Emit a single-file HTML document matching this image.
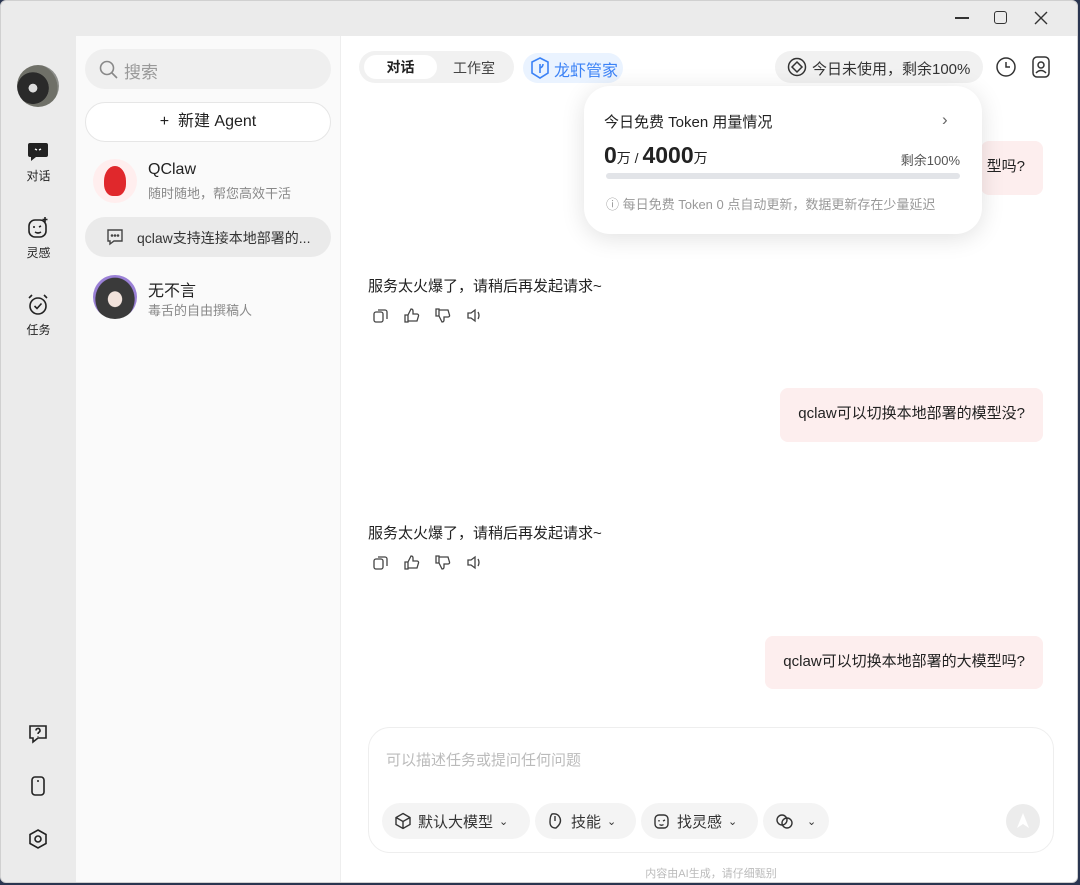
<!DOCTYPE html>
<html><head><meta charset="utf-8"><style>
*{margin:0;padding:0;box-sizing:border-box}
body{width:1080px;height:885px;background:#2a3550;font-family:"Liberation Sans","Noto Sans CJK SC",sans-serif;overflow:hidden;position:relative;color:#222}
.win{position:absolute;left:0;top:0;width:1078px;height:883px;background:#ebebeb;border-radius:6px;overflow:hidden;border:1px solid #d0d0d0}
.abs{position:absolute}
.rail{left:0;top:35px;width:75px;height:850px}
.side{left:75px;top:35px;width:265px;height:850px;background:#fafafa;border-right:1px solid #eee}
.main{left:340px;top:35px;width:740px;height:850px;background:#fff}
.ri{position:absolute;left:0;width:75px;text-align:center;font-size:12px;color:#222}
.pill{position:absolute;border-radius:20px}
.bubble{position:absolute;background:#fdeeee;border-radius:8px;font-size:15px;color:#222;padding:0 18px;line-height:52px}
.act{position:absolute;display:flex;gap:14px}
.act svg{width:17px;height:17px}
.chip{position:absolute;top:802px;height:36px;background:#f4f4f4;border-radius:18px;display:flex;align-items:center;gap:6px;padding:0 12px;font-size:15px;color:#333}
</style></head><body>
<div class="win">
<div class="abs" style="left:954px;top:16px;width:14px;height:1.5px;background:#333"></div>
<div class="abs" style="left:993px;top:10px;width:13px;height:13px;border:1.5px solid #333;border-radius:3px"></div>
<svg class="abs" style="left:1033px;top:10px" width="14" height="14"><path d="M1 1L13 13M13 1L1 13" stroke="#333" stroke-width="1.4"/></svg>

<div class="abs rail">
 <div class="abs" style="left:16px;top:29px;width:42px;height:42px;border-radius:50%;background:radial-gradient(circle at 38% 55%,#ddd 0 12%,#2a2a2a 13% 45%,#6f7068 46% 70%,#8c8e8a 71%)"></div>
 <svg class="abs" style="left:25px;top:104px" width="24" height="24"><path d="M4 3h16a2 2 0 0 1 2 2v10a2 2 0 0 1-2 2H10l-5 4v-4H4a2 2 0 0 1-2-2V5a2 2 0 0 1 2-2z" fill="#222"/><path d="M9 9l2 1M15 9l-2 1" stroke="#fff" stroke-width="1.5"/></svg>
 <div class="ri" style="top:131px">对话</div>
 <svg class="abs" style="left:25px;top:180px" width="24" height="24" fill="none" stroke="#222" stroke-width="1.6"><rect x="3" y="4" width="17" height="17" rx="6"/><path d="M8 10v2M13 11l2-1M9 16q3 2 6 0M19 1v5M16.5 3.5h5"/></svg>
 <div class="ri" style="top:208px">灵感</div>
 <svg class="abs" style="left:25px;top:257px" width="24" height="24" fill="none" stroke="#222" stroke-width="1.6"><circle cx="12" cy="13" r="8"/><path d="M8.5 13l2.5 2.5 4.5-5M3 5l3-3M21 5l-3-3"/></svg>
 <div class="ri" style="top:285px">任务</div>
 <svg class="abs" style="left:26px;top:686px" width="22" height="22" fill="none" stroke="#222" stroke-width="1.6"><path d="M3 4h16v12H11l-5 4v-4H3z"/><path d="M9 8.5a2 2 0 1 1 3 1.7c-.8.5-1 1-1 1.8M11 14v.5"/></svg>
 <svg class="abs" style="left:28px;top:739px" width="18" height="22" fill="none" stroke="#222" stroke-width="1.6"><rect x="3" y="2" width="12" height="18" rx="3"/><path d="M8 6h2"/></svg>
 <svg class="abs" style="left:26px;top:792px" width="22" height="22" fill="none" stroke="#222" stroke-width="1.6"><path d="M11 2l8 4.5v9L11 20l-8-4.5v-9z"/><circle cx="11" cy="11" r="3"/></svg>
</div>

<div class="abs side">
 <div class="pill" style="left:9px;top:13px;width:246px;height:40px;background:#efefef"></div>
 <svg class="abs" style="left:23px;top:24px" width="19" height="19" fill="none" stroke="#888" stroke-width="1.6"><circle cx="8" cy="8" r="6.5"/><path d="M13 13l5 5"/></svg>
 <div class="abs" style="left:48px;top:22px;font-size:17px;color:#999">搜索</div>
 <div class="pill" style="left:9px;top:66px;width:246px;height:40px;background:#fff;border:1px solid #e6e6e6;text-align:center;line-height:38px;font-size:16px;color:#222">+&nbsp;&nbsp;新建 Agent</div>
 <div class="abs" style="left:17px;top:123px;width:44px;height:44px;border-radius:50%;background:#ffeeee"></div>
 <div class="abs" style="left:28px;top:130px;width:22px;height:30px;border-radius:50% 50% 40% 40%;background:#e0282c"></div>
 <div class="abs" style="left:72px;top:125px;font-size:16px">QClaw</div>
 <div class="abs" style="left:72px;top:147px;font-size:13px;color:#888">随时随地，帮您高效干活</div>
 <div class="pill" style="left:9px;top:181px;width:246px;height:40px;background:#eaeaea"></div>
 <svg class="abs" style="left:29px;top:191px" width="20" height="20" fill="none" stroke="#444" stroke-width="1.4"><path d="M3 3h14v11H9l-4 3v-3H3z"/><circle cx="7" cy="8.5" r=".6" fill="#444"/><circle cx="10" cy="8.5" r=".6" fill="#444"/><circle cx="13" cy="8.5" r=".6" fill="#444"/></svg>
 <div class="abs" style="left:61px;top:192px;font-size:14px;color:#333">qclaw支持连接本地部署的...</div>
 <div class="abs" style="left:17px;top:239px;width:44px;height:44px;border-radius:50%;background:radial-gradient(ellipse at 50% 55%,#f2e3dc 0 22%,#3a3a3a 24% 62%,#9a80d6 64%)"></div>
 <div class="abs" style="left:72px;top:241px;font-size:16px">无不言</div>
 <div class="abs" style="left:72px;top:264px;font-size:13px;color:#888">毒舌的自由撰稿人</div>
</div>

<div class="abs main">
 <div class="pill" style="left:18px;top:15px;width:155px;height:32px;background:#f1f1f1"></div>
 <div class="pill" style="left:23px;top:19px;width:73px;height:24px;background:#fff;text-align:center;line-height:24px;font-size:14px;font-weight:bold">对话</div>
 <div class="abs" style="left:112px;top:22px;font-size:14px;color:#444">工作室</div>
 <div class="pill" style="left:182px;top:17px;width:100px;height:30px;background:#eaf3ff"></div>
 <svg class="abs" style="left:189px;top:21px" width="20" height="22" fill="none" stroke="#3b82f6" stroke-width="1.6"><path d="M10 1l8 4v11l-8 5-8-5V5z"/><path d="M10 7v9M10 11q3-1 3-4"/></svg>
 <div class="abs" style="left:213px;top:21px;font-size:16px;color:#3b82f6">龙虾管家</div>
 <div class="pill" style="left:434px;top:15px;width:208px;height:32px;background:#f1f1f1"></div>
 <svg class="abs" style="left:446px;top:21px" width="20" height="20" fill="none" stroke="#333" stroke-width="1.5"><circle cx="10" cy="10" r="8.5"/><path d="M10 5l5 5-5 5-5-5z"/></svg>
 <div class="abs" style="left:471px;top:22px;font-size:15px;color:#333">今日未使用，剩余100%</div>
 <svg class="abs" style="left:654px;top:20px" width="22" height="22" fill="none" stroke="#333" stroke-width="1.5"><circle cx="11" cy="11" r="9"/><path d="M11 6v5h4"/></svg>
 <svg class="abs" style="left:690px;top:19px" width="20" height="24" fill="none" stroke="#333" stroke-width="1.5"><rect x="2" y="2" width="16" height="20" rx="4"/><circle cx="10" cy="10" r="3"/><path d="M5 18q5-5 10 0"/></svg>

 <div class="bubble" style="left:640px;top:105px;height:54px;padding-left:0;text-align:right;width:62px;padding-right:18px">型吗?</div>

 <div class="abs" style="left:243px;top:50px;width:398px;height:148px;background:#fff;border-radius:26px;box-shadow:0 4px 24px rgba(0,0,0,.12)">
  <div class="abs" style="left:20px;top:25px;font-size:15px;color:#222">今日免费 Token 用量情况</div>
  <div class="abs" style="left:358px;top:24px;font-size:17px;color:#666">›</div>
  <div class="abs" style="left:20px;top:56px;font-size:23px;font-weight:bold">0<span style="font-size:14px;font-weight:normal">万 / </span>4000<span style="font-size:14px;font-weight:normal">万</span></div>
  <div class="abs" style="right:22px;top:64px;font-size:13px;color:#555">剩余100%</div>
  <div class="abs" style="left:22px;top:87px;width:354px;height:6px;background:#e2e4e8;border-radius:3px"></div>
  <div class="abs" style="left:22px;top:108px;font-size:13px;color:#999">ⓘ 每日免费 Token 0 点自动更新，数据更新存在少量延迟</div>
 </div>

 <div class="abs" style="left:27px;top:239px;font-size:15px">服务太火爆了，请稍后再发起请求~</div>
 <div class="act" style="left:31px;top:271px">
  <svg fill="none" stroke="#444" stroke-width="1.3"><rect x="2" y="5" width="9" height="10" rx="2"/><path d="M6 3h7a2 2 0 0 1 2 2v7"/></svg>
  <svg fill="none" stroke="#444" stroke-width="1.3"><path d="M2 8h3v7H2zM5 8l3-6q2 0 2 2v3h4a1.5 1.5 0 0 1 1.5 2l-1.5 5H5"/></svg>
  <svg fill="none" stroke="#444" stroke-width="1.3"><path d="M2 2h3v7H2zM5 9l3 6q2 0 2-2v-3h4a1.5 1.5 0 0 0 1.5-2L14 3H5"/></svg>
  <svg fill="none" stroke="#444" stroke-width="1.3"><path d="M3 6h3l4-3v11l-4-3H3zM13 5q2 3.5 0 7"/></svg>
 </div>
 <div class="bubble" style="right:38px;top:352px;height:54px">qclaw可以切换本地部署的模型没?</div>
 <div class="abs" style="left:27px;top:486px;font-size:15px">服务太火爆了，请稍后再发起请求~</div>
 <div class="act" style="left:31px;top:518px">
  <svg fill="none" stroke="#444" stroke-width="1.3"><rect x="2" y="5" width="9" height="10" rx="2"/><path d="M6 3h7a2 2 0 0 1 2 2v7"/></svg>
  <svg fill="none" stroke="#444" stroke-width="1.3"><path d="M2 8h3v7H2zM5 8l3-6q2 0 2 2v3h4a1.5 1.5 0 0 1 1.5 2l-1.5 5H5"/></svg>
  <svg fill="none" stroke="#444" stroke-width="1.3"><path d="M2 2h3v7H2zM5 9l3 6q2 0 2-2v-3h4a1.5 1.5 0 0 0 1.5-2L14 3H5"/></svg>
  <svg fill="none" stroke="#444" stroke-width="1.3"><path d="M3 6h3l4-3v11l-4-3H3zM13 5q2 3.5 0 7"/></svg>
 </div>
 <div class="bubble" style="right:38px;top:600px;height:53px">qclaw可以切换本地部署的大模型吗?</div>

 <div class="abs" style="left:27px;top:691px;width:686px;height:126px;border:1px solid #eee;border-radius:22px;background:#fff"></div>
 <div class="abs" style="left:45px;top:713px;font-size:15px;color:#bbb">可以描述任务或提问任何问题</div>
 <div class="abs" style="left:665px;top:768px;width:34px;height:34px;border-radius:50%;background:#ececec"></div>
 <svg class="abs" style="left:675px;top:776px" width="14" height="18"><path d="M7 1L13 16L7 12L1 16z" fill="#fff"/></svg>
 <div class="abs" style="left:0;top:829px;width:740px;text-align:center;font-size:11px;color:#bbb">内容由AI生成，请仔细甄别</div>
</div>

<div class="chip" style="left:381px;width:148px"><svg width="18" height="18" fill="none" stroke="#333" stroke-width="1.4"><path d="M9 1.5l7 4v7l-7 4-7-4v-7zM2 5.5l7 4 7-4M9 9.5v7"/></svg>默认大模型<span style="font-size:11px">⌄</span></div>
<div class="chip" style="left:534px;width:101px"><svg width="18" height="18" fill="none" stroke="#333" stroke-width="1.4"><path d="M5 2q6-1 8 4t-4 10q-6 0-6-6 0-6 2-8zM8 4v5"/></svg>技能<span style="font-size:11px">⌄</span></div>
<div class="chip" style="left:640px;width:117px"><svg width="18" height="18" fill="none" stroke="#333" stroke-width="1.4"><rect x="2" y="3" width="13" height="13" rx="4"/><path d="M6 8v1.5M10 9l2-1M6.5 12.5q2 1.5 4 0"/></svg>找灵感<span style="font-size:11px">⌄</span></div>
<div class="chip" style="left:762px;width:66px"><svg width="20" height="18" fill="none" stroke="#333" stroke-width="1.4"><circle cx="7" cy="8" r="5"/><circle cx="12" cy="11" r="5"/></svg><span style="font-size:11px;margin-left:6px">⌄</span></div>
</div>
</body></html>
